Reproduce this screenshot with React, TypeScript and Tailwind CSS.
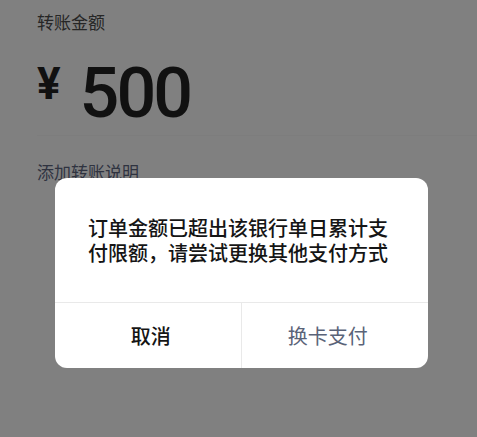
import React from 'react';

const cjk = "font-['Noto_Sans_CJK_SC','Noto_Sans',sans-serif]";

const App: React.FC = () => {
    return (
        <div className={`relative h-[437px] w-full overflow-hidden bg-[#808080] ${cjk}`}>
            {/* Page behind the mask */}
            <div className="pl-[37px] pt-[12px]">
                <div className="text-[17px] leading-[20px] text-[#262626]">转账金额</div>

                {/* Amount */}
                <div className="mt-[26px] flex items-start gap-[19px] border-b border-[#7d7d7d] pb-[7px]">
                    <span className="mt-[4px] font-['Roboto',sans-serif] text-[44px] font-bold leading-none text-[#111]">¥</span>
                    <span className="font-['Roboto',sans-serif] text-[70px] font-medium leading-none tracking-[-3px] text-[#111]">500</span>
                </div>

                <div className="mt-[26px] text-[17px] leading-[20px] text-[#2f3340]">添加转账说明</div>
            </div>

            {/* Dialog */}
            <div className="absolute left-[55px] top-[178px] flex h-[190px] w-[373px] flex-col overflow-hidden rounded-[12px] bg-white">
                <div className="flex flex-1 items-center justify-center px-[33px]">
                    <p className="text-[20px] font-medium leading-[25px] text-[#151515]">
                        订单金额已超出该银行单日累计支付限额，请尝试更换其他支付方式
                    </p>
                </div>
                <div className="grid h-[66px] grid-cols-2 border-t border-[#e9e9e9]">
                    <button className="flex items-center justify-center border-r border-[#e9e9e9] pl-[6px] text-[20px] font-medium text-[#151515]">
                        取消
                    </button>
                    <button className="flex items-center justify-center pr-[14px] text-[20px] text-[#5a6378]">
                        换卡支付
                    </button>
                </div>
            </div>
        </div>
    );
};

export default App;
